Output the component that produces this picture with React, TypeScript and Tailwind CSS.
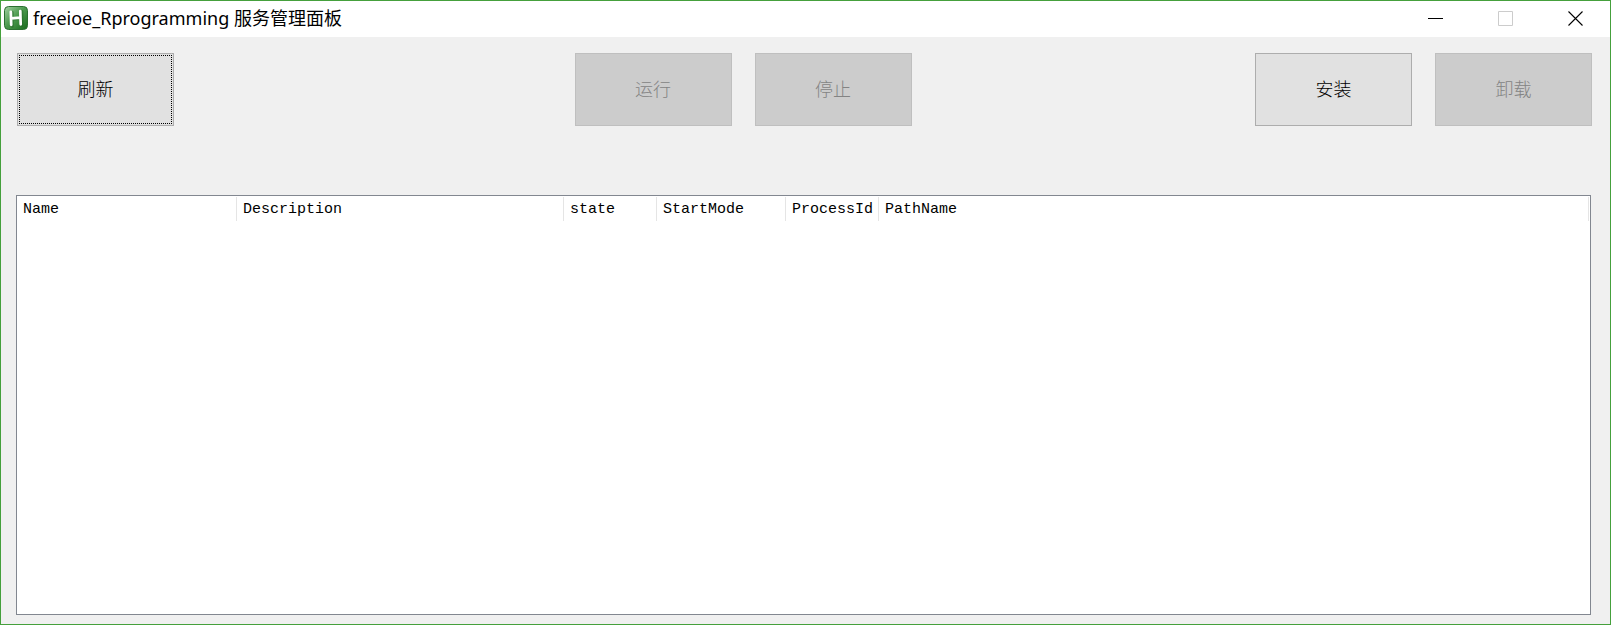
import type { ReactNode } from 'react';

const columns = [
  { label: 'Name', width: 'w-[220px]' },
  { label: 'Description', width: 'w-[327px]' },
  { label: 'state', width: 'w-[93px]' },
  { label: 'StartMode', width: 'w-[129px]' },
  { label: 'ProcessId', width: 'w-[93px]' },
  { label: 'PathName', width: 'w-auto' },
];

function AppIcon() {
  return (
    <svg width="24" height="24" viewBox="0 0 24 24" aria-hidden="true">
      <defs>
        <linearGradient id="tile" x1="0" y1="0" x2="1" y2="1">
          <stop offset="0" stopColor="#a3d0a3" />
          <stop offset="0.45" stopColor="#4f9c51" />
          <stop offset="1" stopColor="#176a1b" />
        </linearGradient>
      </defs>
      <rect x="0.5" y="0.5" width="23" height="23" rx="4" fill="url(#tile)" stroke="#2b7030" />
      <path d="M7.5 5.5v14M17 4.5v14M7.5 12.5L17 11.5" fill="none" stroke="#1d5f22" strokeWidth="3" strokeLinecap="round" opacity="0.45" transform="translate(0.8 0.8)" />
      <path d="M6.8 5.8L7.2 18.8M16.3 5L16.7 18.3M7 12.4L16.5 11.7" fill="none" stroke="#fff" strokeWidth="2.7" strokeLinecap="round" />
    </svg>
  );
}

function CaptionButton({ label, disabled, children }: { label: string; disabled?: boolean; children: ReactNode }) {
  return (
    <button type="button" aria-label={label} disabled={disabled} className="flex w-[69px] items-center justify-center">
      <svg width="15" height="15" viewBox="0 0 15 15" fill="none" aria-hidden="true">
        {children}
      </svg>
    </button>
  );
}

function PanelButton({ children, disabled, focused }: { children: ReactNode; disabled?: boolean; focused?: boolean }) {
  return (
    <button
      type="button"
      disabled={disabled}
      className={`h-[73px] w-[157px] border text-lg ${
        disabled ? 'border-[#bfbfbf] bg-[#cccccc] text-[#838383]' : 'border-[#adadad] bg-[#e1e1e1] text-black'
      } ${focused ? 'outline-1 -outline-offset-3 outline-black outline-dotted' : ''}`}
    >
      {children}
    </button>
  );
}

export default function App() {
  return (
    <div className="flex min-h-screen flex-col border border-[#45a03c] bg-[#f0f0f0] font-['Liberation_Serif','Noto_Sans_CJK_SC',serif] text-black">
      <header className="flex h-9 items-center bg-white pb-px pl-[3px]">
        <div className="pb-px">
          <AppIcon />
        </div>
        <h1 className="ml-[5px] flex-1 pb-px font-['Noto_Sans','Noto_Sans_CJK_SC',sans-serif] text-lg leading-6 font-normal whitespace-nowrap">
          freeioe_Rprogramming 服务管理面板
        </h1>
        <div className="flex gap-px self-stretch">
          <CaptionButton label="最小化">
            <path d="M0 7.5h15" stroke="#000" />
          </CaptionButton>
          <CaptionButton label="最大化" disabled>
            <path d="M0.5 0.5h14v14h-14z" stroke="#ccc" />
          </CaptionButton>
          <CaptionButton label="关闭">
            <path d="M0.5 0.5l14 14M14.5 0.5l-14 14" stroke="#000" strokeWidth="1.1" />
          </CaptionButton>
        </div>
      </header>

      <main className="flex flex-1 flex-col pt-4 pr-[18px] pb-[9px] pl-4">
        <div className="grid grid-cols-[157px_7fr_337px_6fr_337px] font-light">
          <PanelButton focused>刷新</PanelButton>
          <div className="col-start-3 flex gap-[23px]">
            <PanelButton disabled>运行</PanelButton>
            <PanelButton disabled>停止</PanelButton>
          </div>
          <div className="col-start-5 flex gap-[23px]">
            <PanelButton>安装</PanelButton>
            <PanelButton disabled>卸载</PanelButton>
          </div>
        </div>

        <div className="mt-[69px] mr-px -ml-px flex-1 border border-[#828790] bg-white pt-px pr-px">
          <table aria-label="服务列表" className="w-full table-fixed border-collapse font-['Liberation_Mono',monospace] text-[15px]">
            <thead>
              <tr className="h-6">
                {columns.map(({ label, width }) => (
                  <th key={label} scope="col" className={`${width} p-0 text-left font-normal whitespace-nowrap`}>
                    <div className="h-6 border-r border-[#e5e5e5] pl-1.5 leading-[26px]">{label}</div>
                  </th>
                ))}
              </tr>
            </thead>
            <tbody />
          </table>
        </div>
      </main>
    </div>
  );
}
